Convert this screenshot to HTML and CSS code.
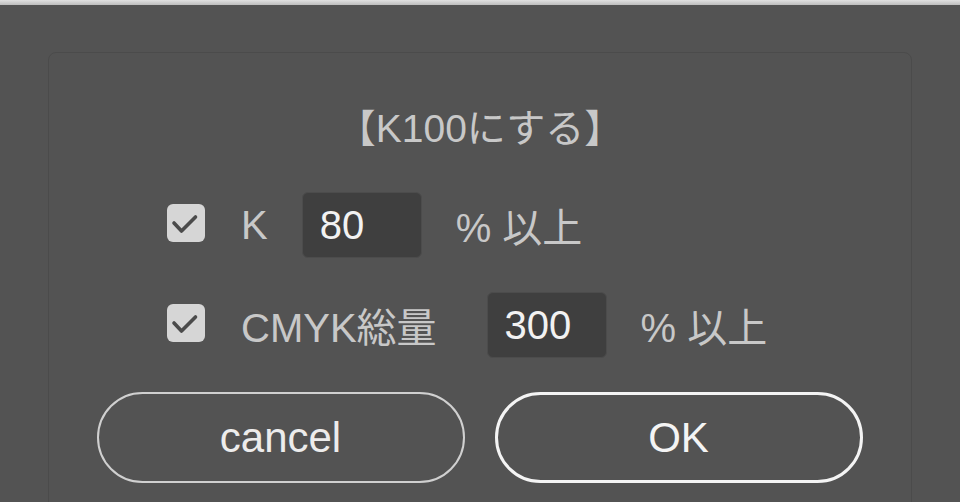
FILE: index.html
```html
<!doctype html>
<html lang="ja">
<head>
	<meta charset="UTF-8">
	<title>K100にする</title>
	<link rel="stylesheet" href="styles.css">
</head>
<body>
	<div id="topbar"></div>
	<div id="panel">
		<h1 class="title">【K100にする】</h1>
		<div class="row">
			<span class="check"><svg class="tick" width="38" height="38" viewBox="0 0 38 38"><path d="M7 19l7.5 8L28.5 13" fill="none" stroke="#4b4b4b" stroke-width="3.6" stroke-linecap="round" stroke-linejoin="round"/></svg></span>
			<span class="label">K</span>
			<span class="field">80</span>
			<span class="unit">% 以上</span>
		</div>
		<div class="row">
			<span class="check"><svg class="tick" width="38" height="38" viewBox="0 0 38 38"><path d="M7 19l7.5 8L28.5 13" fill="none" stroke="#4b4b4b" stroke-width="3.6" stroke-linecap="round" stroke-linejoin="round"/></svg></span>
			<span class="label label-wide">CMYK総量</span>
			<span class="field">300</span>
			<span class="unit">% 以上</span>
		</div>
		<div class="buttons">
			<button class="btn">cancel</button>
			<button class="btn btn-ok">OK</button>
		</div>
	</div>
</body>
</html>
```

FILE: styles.css
```css
*{
	margin: 0;
	padding: 0;
	box-sizing: border-box;
}

html, body{
	height: 100%;
	overflow: hidden;
}

body{
	background-color: #535353;
	font-family: "Liberation Sans", "Noto Sans CJK JP", sans-serif;
	color: #c8c8c8;
}

#topbar{
	height: 5px;
	background: linear-gradient(#e0e0e0, #bdbdbd);
}

#panel{
	margin: 47px 48px 0;
	height: 520px;
	border: 1px solid #4b4b4b;
	border-radius: 8px;
	padding-top: 52px;
}

.title{
	font-weight: normal;
	font-size: 39px;
	line-height: 48px;
	text-align: center;
}

.row{
	display: flex;
	align-items: center;
	height: 66px;
	padding-left: 118px;
	font-size: 40px;
}

.row + .row{
	margin-top: 34px;
}

.title + .row{
	margin-top: 39px;
}

.check{
	flex: none;
	width: 38px;
	height: 38px;
	background-color: #d6d6d6;
	border-radius: 6px;
	margin-right: 36px;
	margin-top: -4px;
}

.tick{
	display: block;
}

.label{
	margin-right: 34px;
}

.label-wide{
	margin-right: 50px;
}

.field{
	width: 120px;
	height: 66px;
	background-color: #3f3f3f;
	border: 1px solid #4c4c4c;
	border-radius: 6px;
	color: #f2f2f2;
	padding-left: 17px;
	line-height: 64px;
	margin-right: 34px;
}

.buttons{
	display: flex;
	justify-content: center;
	gap: 30px;
	margin-top: 34px;
	padding-right: 1px;
}

.btn{
	width: 368px;
	height: 91px;
	border-radius: 46px;
	border: 2px solid #d0d0d0;
	background: transparent;
	color: #ececec;
	font-family: "Liberation Sans", "Noto Sans CJK JP", sans-serif;
	font-size: 42px;
}

.btn-ok{
	border: 3px solid #f4f4f4;
	color: #f4f4f4;
}
```
